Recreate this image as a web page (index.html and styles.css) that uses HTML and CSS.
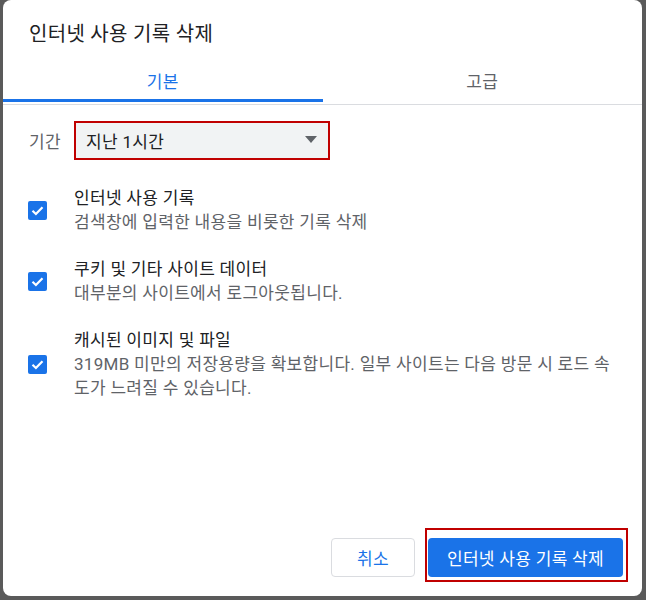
FILE: index.html
```html
<!DOCTYPE html>
<html lang="ko">
<head>
    <meta charset="UTF-8">
    <title>인터넷 사용 기록 삭제</title>
    <link rel="stylesheet" href="styles.css">
</head>
<body>
    <div class="dialog">
        <h1 class="dialog-title">인터넷 사용 기록 삭제</h1>

        <div class="tabs">
            <div class="tab active">기본</div>
            <div class="tab">고급</div>
        </div>

        <div class="content">
            <div class="period">
                <span class="period-label">기간</span>
                <div class="select">
                    <span>지난 1시간</span>
                    <span class="arrow"></span>
                </div>
            </div>

            <div class="options">
                <label class="option">
                    <span class="checkbox">
                        <svg width="19" height="19" viewBox="0 0 19 19"><polyline points="4.5,9.8 7.9,13 14.5,6.2" fill="none" stroke="#fff" stroke-width="2.2"/></svg>
                    </span>
                    <span class="option-text">
                        <span class="option-title">인터넷 사용 기록</span>
                        <span class="option-desc">검색창에 입력한 내용을 비롯한 기록 삭제</span>
                    </span>
                </label>
                <label class="option">
                    <span class="checkbox">
                        <svg width="19" height="19" viewBox="0 0 19 19"><polyline points="4.5,9.8 7.9,13 14.5,6.2" fill="none" stroke="#fff" stroke-width="2.2"/></svg>
                    </span>
                    <span class="option-text">
                        <span class="option-title">쿠키 및 기타 사이트 데이터</span>
                        <span class="option-desc">대부분의 사이트에서 로그아웃됩니다.</span>
                    </span>
                </label>
                <label class="option">
                    <span class="checkbox">
                        <svg width="19" height="19" viewBox="0 0 19 19"><polyline points="4.5,9.8 7.9,13 14.5,6.2" fill="none" stroke="#fff" stroke-width="2.2"/></svg>
                    </span>
                    <span class="option-text">
                        <span class="option-title">캐시된 이미지 및 파일</span>
                        <span class="option-desc">319MB 미만의 저장용량을 확보합니다. 일부 사이트는 다음 방문 시 로드 속도가 느려질 수 있습니다.</span>
                    </span>
                </label>
            </div>
        </div>

        <div class="footer">
            <button class="btn btn-cancel">취소</button>
            <div class="highlight">
                <button class="btn btn-primary">인터넷 사용 기록 삭제</button>
            </div>
        </div>
    </div>
</body>
</html>
```

FILE: styles.css
```css
/* page behind the dialog */
html, body {
    height: 100%;
    margin: 0;
    background-color: #5a5a5a;
    font-family: Roboto, "Noto Sans CJK KR", sans-serif;
    color: #202124;
    letter-spacing: 0.3px;
}

/* dialog box */
.dialog {
    box-sizing: border-box;
    margin-left: 3px;
    width: 639px;
    height: 596px;
    background-color: #fff;
    border-radius: 8px;
    display: flex;
    flex-direction: column;
}

.dialog-title {
    margin: 0 0 10px 0;
    padding: 22px 26px 0 26px;
    font-size: 20px;
    font-weight: normal;
    line-height: 24px;
    color: #202124;
}

/* tabs */
.tabs {
    display: flex;
    height: 48px;
    border-bottom: 1px solid #dadce0;
}

.tab {
    position: relative;
    flex: 1;
    display: flex;
    justify-content: center;
    align-items: center;
    font-size: 17px;
    color: #5f6368;
}

.tab.active {
    color: #1a73e8;
}

.tab.active::after {
    content: "";
    position: absolute;
    left: 0;
    right: 0;
    bottom: 2px;
    height: 3px;
    background-color: #1a73e8;
}

/* body */
.content {
    flex: 1;
    padding: 16px 26px 0 25px;
}

.period {
    display: flex;
    align-items: center;
    margin-left: 1px;
}

.period-label {
    width: 45px;
    font-size: 17px;
    color: #5f6368;
}

.select {
    box-sizing: border-box;
    width: 256px;
    height: 39px;
    background-color: #f1f3f4;
    border: 2px solid #c00000;
    padding: 0 11px 0 10px;
    display: flex;
    align-items: center;
    justify-content: space-between;
    font-size: 17px;
    color: #202124;
}

.arrow {
    width: 0;
    height: 0;
    margin-top: -3px;
    border-left: 6.5px solid transparent;
    border-right: 6.5px solid transparent;
    border-top: 7px solid #5f6368;
}

.options {
    display: flex;
    flex-direction: column;
    gap: 23px;
    margin-top: 26px;
}

.option {
    display: flex;
    align-items: center;
}

.checkbox {
    flex: none;
    width: 19px;
    height: 19px;
    margin-right: 27px;
    background-color: #1a73e8;
    border-radius: 2px;
    display: flex;
}

.option-text {
    display: flex;
    flex-direction: column;
    font-size: 17px;
    line-height: 24px;
}

.option-title {
    color: #202124;
}

.option-desc {
    color: #5f6368;
}

/* buttons */
.footer {
    display: flex;
    justify-content: flex-end;
    align-items: flex-end;
    gap: 13px;
    padding: 0 19px 19px 0;
}

.btn {
    height: 39px;
    border-radius: 4px;
    font-family: inherit;
    font-size: 17px;
    letter-spacing: 0.3px;
    cursor: pointer;
}

.btn-cancel {
    width: 84px;
    background-color: #fff;
    border: 1px solid #dadce0;
    color: #1a73e8;
}

.btn-primary {
    display: block;
    width: 195px;
    background-color: #1a73e8;
    border: none;
    color: #fff;
}

/* red marker around the main button */
.highlight {
    position: relative;
}

.highlight::after {
    content: "";
    position: absolute;
    top: -10px;
    right: -5px;
    bottom: -5px;
    left: -3px;
    border: 2px solid #c00000;
    pointer-events: none;
}
```
